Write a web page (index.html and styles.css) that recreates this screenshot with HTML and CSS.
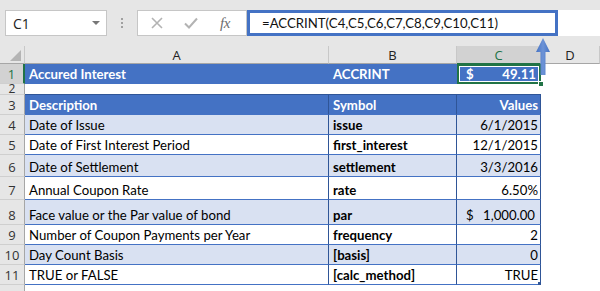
FILE: index.html
```html
<!DOCTYPE html>
<html>
<head>
<meta charset="utf-8">
<link rel="stylesheet" href="styles.css">
</head>
<body>
<div class="top">
  <div class="namebox"><span class="nb-text">C1</span><span class="nb-arrow"></span></div>
  <div class="grip"><i></i><i></i><i></i></div>
  <div class="fxbox">
    <svg class="ic-x" width="12" height="12" viewBox="0 0 12 12"><path d="M1 1 L11 11 M11 1 L1 11" stroke="#b3b3b3" stroke-width="1.6" fill="none"/></svg>
    <svg class="ic-check" width="14" height="12" viewBox="0 0 14 12"><path d="M1 6.5 L5 10.5 L13 1.5" stroke="#b3b3b3" stroke-width="2" fill="none"/></svg>
    <span class="ic-fx">fx</span>
  </div>
  <div class="formula">
    <span class="f-text">=ACCRINT(C4,C5,C6,C7,C8,C9,C10,C11)</span>
    <div class="callout"></div>
  </div>
</div>
<div class="sheet">
  <div class="ch corner"><span class="tri"></span></div>
  <div class="ch">A</div>
  <div class="ch">B</div>
  <div class="ch sel">C</div>
  <div class="ch">D</div>

  <div class="rh sel">1</div>
  <div class="c hdr b">Accured Interest</div>
  <div class="c hdr b">ACCRINT</div>
  <div class="c hdr b c1"><span>$</span><span>49.11</span><i class="handle"></i></div>
  <div class="c plain"></div>

  <div class="rh short"><span>2</span></div>
  <div class="c gap"></div>
  <div class="c gap"></div>
  <div class="c gap"></div>
  <div class="c plain"></div>

  <div class="rh">3</div>
  <div class="c hdr t b vr">Description</div>
  <div class="c hdr t b vr">Symbol</div>
  <div class="c hdr t b vr r">Values</div>
  <div class="c plain"></div>

  <div class="rh">4</div>
  <div class="c band vr">Date of Issue</div>
  <div class="c band vr b">issue</div>
  <div class="c band vr r">6/1/2015</div>
  <div class="c plain"></div>

  <div class="rh">5</div>
  <div class="c vr">Date of First Interest Period</div>
  <div class="c vr b">first_interest</div>
  <div class="c vr r">12/1/2015</div>
  <div class="c plain"></div>

  <div class="rh">6</div>
  <div class="c band vr">Date of Settlement</div>
  <div class="c band vr b">settlement</div>
  <div class="c band vr r">3/3/2016</div>
  <div class="c plain"></div>

  <div class="rh">7</div>
  <div class="c vr">Annual Coupon Rate</div>
  <div class="c vr b">rate</div>
  <div class="c vr r">6.50%</div>
  <div class="c plain"></div>

  <div class="rh">8</div>
  <div class="c band vr">Face value or the Par value of bond</div>
  <div class="c band vr b">par</div>
  <div class="c band vr acct"><span>$</span><span>1,000.00</span></div>
  <div class="c plain"></div>

  <div class="rh">9</div>
  <div class="c vr">Number of Coupon Payments per Year</div>
  <div class="c vr b">frequency</div>
  <div class="c vr r">2</div>
  <div class="c plain"></div>

  <div class="rh">10</div>
  <div class="c band vr">Day Count Basis</div>
  <div class="c band vr b">[basis]</div>
  <div class="c band vr r">0</div>
  <div class="c plain"></div>

  <div class="rh">11</div>
  <div class="c vr">TRUE or FALSE</div>
  <div class="c vr b">[calc_method]</div>
  <div class="c vr r last">TRUE<i class="corner-dot"></i></div>
  <div class="c plain"></div>

  <div class="rh"></div>
  <div class="c plain"></div>
  <div class="c plain"></div>
  <div class="c plain"></div>
  <div class="c plain"></div>
</div>
<svg class="arrow" width="20" height="40" viewBox="0 0 20 40">
  <defs>
    <linearGradient id="g" x1="0" y1="0" x2="1" y2="0">
      <stop offset="0" stop-color="#4472c4"/>
      <stop offset="0.5" stop-color="#6d93d6"/>
      <stop offset="1" stop-color="#4472c4"/>
    </linearGradient>
  </defs>
  <polygon points="10,1 17,15 12.5,15 12.5,38 7.5,38 7.5,15 3,15" fill="url(#g)"/>
</svg>
</body>
</html>
```
FILE: styles.css
```css
* { box-sizing: border-box; }
html, body { margin: 0; padding: 0; }
body {
  width: 600px;
  height: 291px;
  overflow: hidden;
  background: #fff;
  font-family: Lato, "Liberation Sans", sans-serif;
  font-size: 13.2px;
  color: #000;
  position: relative;
}
.top {
  height: 46px;
  background: #e6e6e6;
  display: flex;
  align-items: flex-start;
  padding-top: 10px;
}
.namebox {
  margin-left: 5px;
  width: 102px;
  height: 26px;
  border: 1px solid #c6c6c6;
  background: #fff;
  display: flex;
  align-items: center;
  justify-content: space-between;
  padding: 0 6px 0 7px;
  font-family: "Open Sans", sans-serif;
  font-size: 14px;
  color: #222;
}
.nb-arrow {
  width: 0; height: 0;
  border-left: 4px solid transparent;
  border-right: 4px solid transparent;
  border-top: 4px solid #777;
}
.grip {
  margin-left: 14px;
  width: 2px;
  height: 26px;
  display: flex;
  flex-direction: column;
  justify-content: center;
  gap: 2px;
}
.grip i { display: block; width: 2px; height: 2px; background: #a0a0a0; }
.fxbox {
  margin-left: 14px;
  width: 110px;
  height: 26px;
  border: 1px solid #c6c6c6;
  background: #fff;
  display: flex;
  align-items: center;
  padding-left: 13px;
}
.ic-check { margin-left: 21px; }
.ic-fx {
  margin-left: 22px;
  font-family: "Liberation Serif", serif;
  font-style: italic;
  font-size: 15px;
  color: #6d6d6d;
  letter-spacing: -0.5px;
}
.formula {
  flex: 1;
  height: 26px;
  background: #fff;
  position: relative;
  display: flex;
  align-items: center;
  padding-left: 15px;
}
.f-text { font-size: 13.2px; color: #111; }
.callout {
  position: absolute;
  left: 0; top: 0;
  width: 311px; height: 26px;
  border: 3px solid #4472c4;
}
.sheet {
  display: grid;
  grid-template-columns: 25px 304px 128px 84px 1fr;
  grid-template-rows: 18px 20px 11px 20px 20px 20px 22px 23px 25px 20px 20px 20px 20px;
}
.ch {
  background: #e6e6e6;
  border-right: 1px solid #c8c8c8;
  border-bottom: 1px solid #a6a6a6;
  display: flex;
  align-items: center;
  justify-content: center;
  padding-top: 1px;
  font-family: "Open Sans", sans-serif;
  font-size: 13px;
  color: #222;
}
.ch.sel { background: #d2d2d2; color: #217346; border-bottom: 1px solid #217346; }
.corner { position: relative; }
.tri {
  position: absolute;
  right: 3px; bottom: 2px;
  width: 0; height: 0;
  border-left: 11px solid transparent;
  border-bottom: 11px solid #b4b4b4;
}
.rh {
  background: #e6e6e6;
  border-right: 1px solid #a6a6a6;
  border-bottom: 1px solid #cfcfcf;
  display: flex;
  align-items: flex-end;
  justify-content: center;
  padding-bottom: 0;
  font-family: "Open Sans", sans-serif;
  font-size: 13px;
  line-height: 17px;
  color: #333;
  overflow: hidden;
}
.rh.short { line-height: 10px; font-size: 12px; }
.rh.sel { background: #d2d2d2; color: #217346; border-right: 2px solid #217346; }
.c {
  display: flex;
  align-items: flex-end;
  padding: 0 3px 0 4px;
  line-height: 17px;
  white-space: nowrap;
  overflow: hidden;
  border-bottom: 1px solid #4472c4;
}
.c.plain { border-bottom: none; }
.c.gap { border-bottom: 1px solid #2f5597; }
.hdr { background: #4472c4; color: #fff; }
.b { font-weight: bold; }
.vr { border-right: 1px solid #2f5597; }
.band { background: #d9e1f2; }
.r { justify-content: flex-end; padding-right: 2px; }
.acct { justify-content: space-between; padding-left: 9px; padding-right: 5px; }
.c1 {
  position: relative;
  justify-content: space-between;
  padding-left: 9px;
  padding-right: 5px;
  padding-bottom: 1px;
  box-shadow: inset 0 0 0 2px #217346, inset 0 0 0 3px #fff;
  overflow: visible;
  border-bottom: none;
}
.handle {
  position: absolute;
  right: -3px; bottom: -3px;
  width: 6px; height: 6px;
  background: #217346;
  border: 1px solid #fff;
}
.last { position: relative; overflow: visible; }
.corner-dot {
  position: absolute;
  right: -1px; bottom: -1px;
  width: 3px; height: 3px;
  background: #2f5597;
}
.arrow {
  position: absolute;
  left: 533px;
  top: 37px;
}
```
